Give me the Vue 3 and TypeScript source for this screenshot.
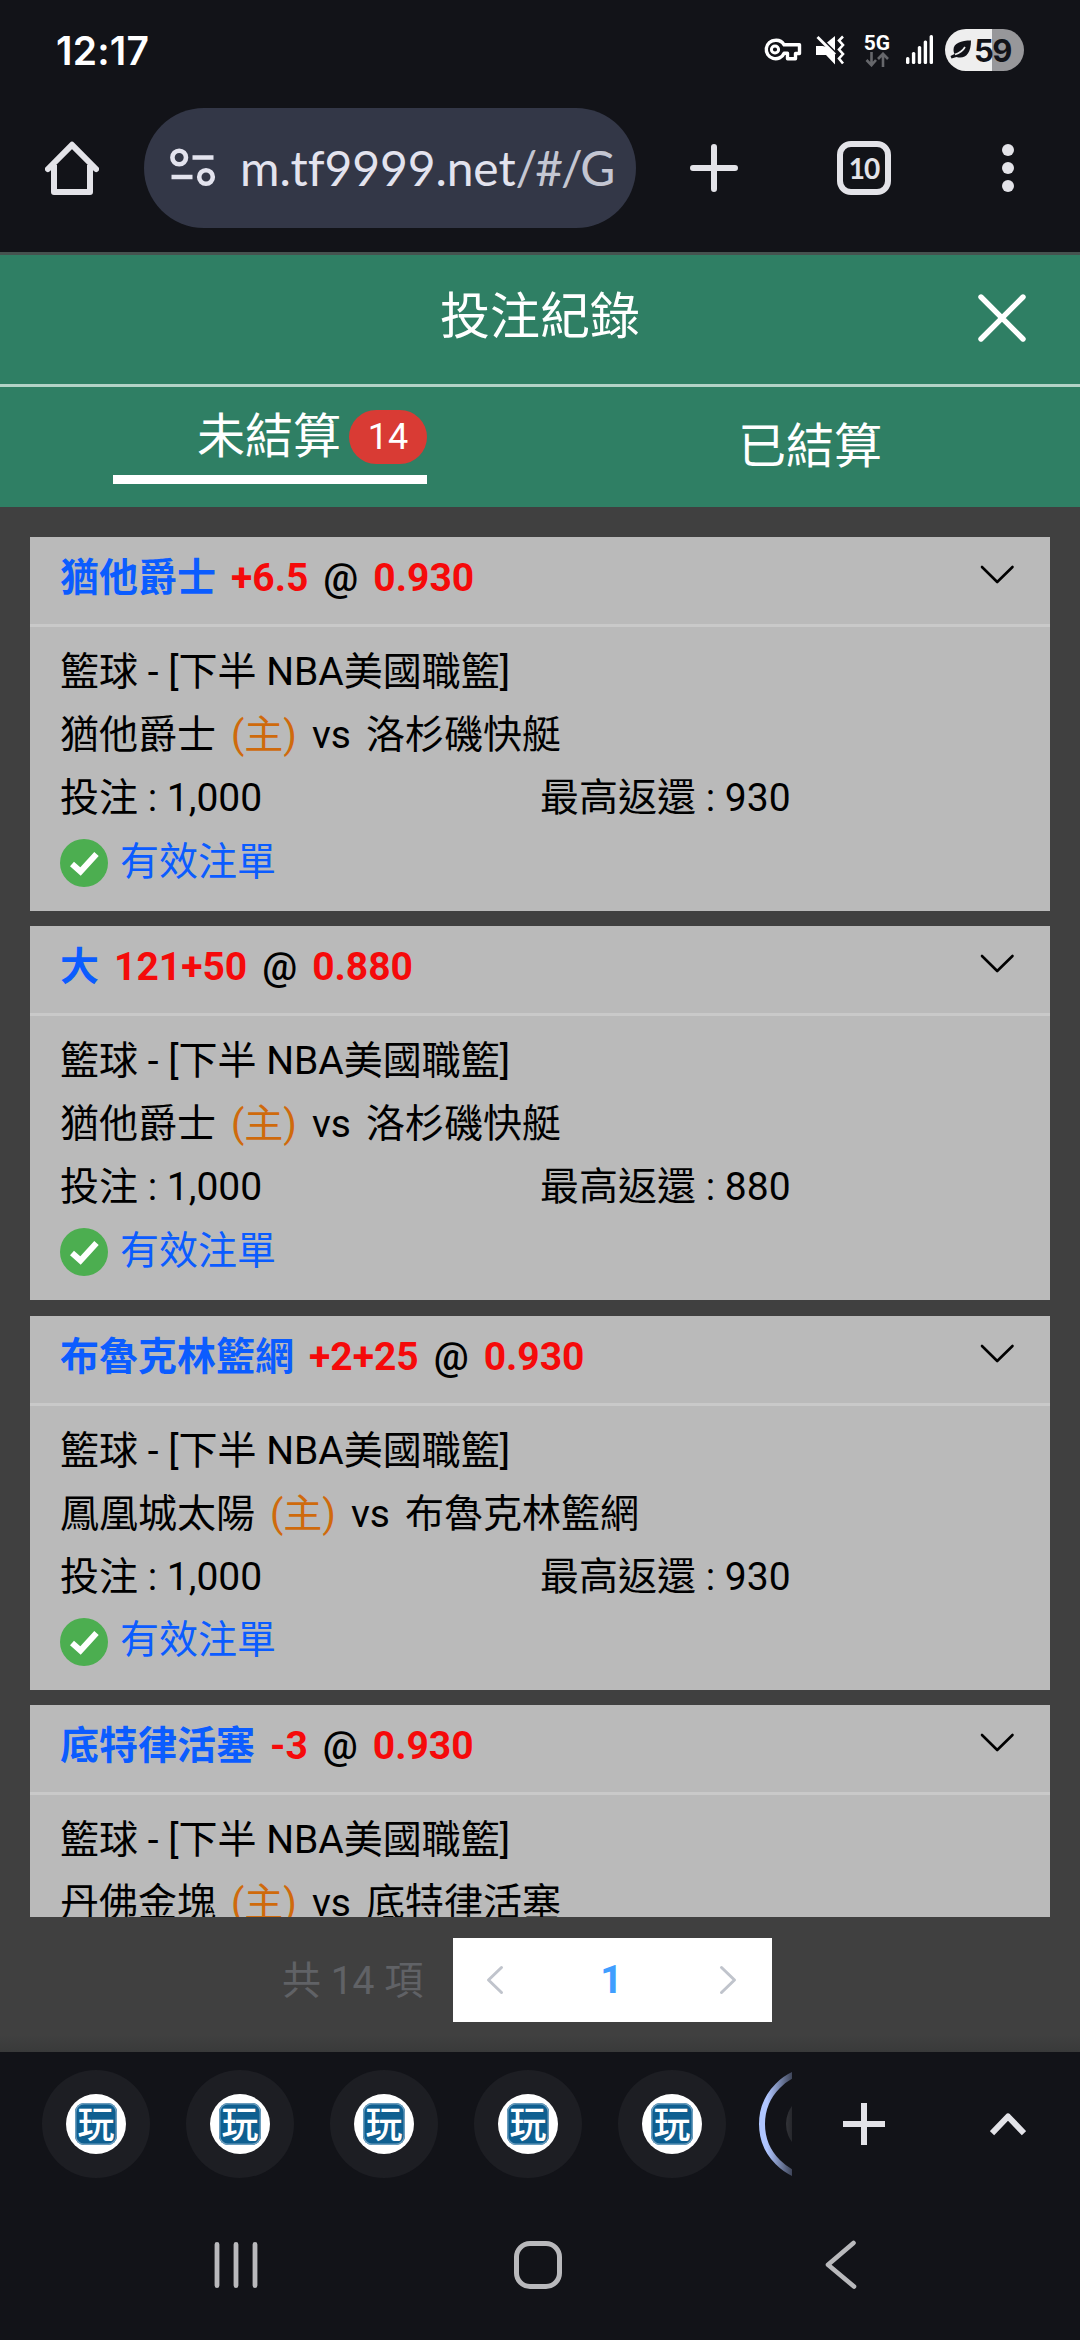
<script setup lang="ts">
interface Bet {
  pick: string
  line: string
  odds: string
  home: string
  away: string
  stake?: string
  payout?: string
}

const league = '籃球 - [下半 NBA美國職籃]'

const bets: Bet[] = [
  { pick: '猶他爵士', line: '+6.5', odds: '0.930', home: '猶他爵士', away: '洛杉磯快艇', stake: '1,000', payout: '930' },
  { pick: '大', line: '121+50', odds: '0.880', home: '猶他爵士', away: '洛杉磯快艇', stake: '1,000', payout: '880' },
  { pick: '布魯克林籃網', line: '+2+25', odds: '0.930', home: '鳳凰城太陽', away: '布魯克林籃網', stake: '1,000', payout: '930' },
  { pick: '底特律活塞', line: '-3', odds: '0.930', home: '丹佛金塊', away: '底特律活塞' },
]

const openTabs = 5
</script>

<template>
  <div class="screen">
    <header class="status">
      <span class="clock">12:17</span>
      <div class="indicators">
        <svg class="key" width="38" height="24" viewBox="0 0 38 24" fill="none" stroke="#fff" stroke-width="3.4" stroke-linejoin="round">
          <path d="M11.500 2.200a9.300 9.300 0 1 0 8.600 13h3.400v5.600h8V15.500h4V6.800H20.100A9.300 9.300 0 0 0 11.500 2.200z" />
          <circle cx="11" cy="11.500" r="3.600" stroke-width="3" />
        </svg>
        <svg class="mute" width="30" height="30" viewBox="0 0 30 30" fill="none">
          <path d="M1 11h6.500L12 12l8 8v9.500L11 20H1z" fill="#fff" />
          <path d="M12 7.500L20 1v14.500z" fill="#fff" />
          <path d="M2.500 2L20 19.500" stroke="#fff" stroke-width="2.800" />
          <path d="M28 1.500l-4 4 4 4.500-4 4.500 4 4.500-4 4.500 4 5" stroke="#fff" stroke-width="2.600" />
        </svg>
        <div class="net">
          <span>5G</span>
          <svg width="24" height="15" viewBox="0 0 24 15" fill="none" stroke="#66676b" stroke-width="2.600">
            <path d="M6.500 0v13M1.500 8l5 5.200L11 8M18 15V2M13 7l5-5.200L23 7" />
          </svg>
        </div>
        <svg class="signal" width="28" height="30" viewBox="0 0 28 30" fill="#fff">
          <rect x="0" y="22" width="3.400" height="7" rx="1.500" />
          <rect x="5.900" y="17" width="3.400" height="12" rx="1.500" />
          <rect x="11.800" y="11" width="3.400" height="18" rx="1.500" />
          <rect x="17.700" y="5.500" width="3.400" height="23.500" rx="1.500" />
          <rect x="23.600" y="0" width="3.400" height="29" rx="1.500" />
        </svg>
        <div class="battery">
          <svg width="22" height="20" viewBox="0 0 22 20">
            <path d="M21 .5C11 .5 3.500 3 3.500 10c0 1.500.3 2.800 1 4L.5 16l1 2.500 5-1.500C15 19.500 21 14 21 .5z" fill="#121318" />
            <path d="M5 14.500C10 13 13 10.500 15 7" stroke="#eee" stroke-width="1.700" fill="none" />
          </svg>
          <span>59</span>
        </div>
      </div>
    </header>

    <div class="toolbar">
      <svg class="home" width="54" height="54" viewBox="0 0 54 54" fill="none" stroke="#e3e3e8" stroke-width="6">
        <path d="M3 28L27 3.800 51 28" stroke-linecap="round" stroke-linejoin="round" />
        <path d="M9 24v27h36V24" stroke-linejoin="round" />
      </svg>
      <div class="omnibox">
        <svg width="46" height="40" viewBox="0 0 46 40" fill="none" stroke="#e3e3ee" stroke-width="4.600">
          <circle cx="9.200" cy="9.500" r="6.800" />
          <path d="M22.500 9.500h21M1.500 29H22.500" />
          <circle cx="36" cy="29" r="6.800" />
        </svg>
        <span class="url">m.tf9999.net<i>/#/G</i></span>
      </div>
      <svg class="plus" width="48" height="48" viewBox="0 0 48 48" stroke="#e3e3e8" stroke-width="6" stroke-linecap="round">
        <path d="M3 24h42M24 3v42" />
      </svg>
      <div class="count">10</div>
      <svg class="dots" width="12" height="48" viewBox="0 0 12 48" fill="#e3e3e8">
        <circle cx="6" cy="6" r="6" />
        <circle cx="6" cy="24" r="6" />
        <circle cx="6" cy="42" r="6" />
      </svg>
    </div>

    <main class="page">
      <div class="title">
        <h1>投注紀錄</h1>
        <svg class="close" width="48" height="48" viewBox="0 0 48 48" stroke="#fff" stroke-width="5.400" stroke-linecap="round">
          <path d="M3 3l42 42M45 3L3 45" />
        </svg>
      </div>
      <nav class="tabs">
        <div class="tab">
          <div class="active">未結算<span class="badge">14</span></div>
        </div>
        <div class="tab">已結算</div>
      </nav>

      <section class="list">
        <article v-for="(bet, i) in bets" :key="i" class="card">
          <div class="head">
            <b class="pick">{{ bet.pick }}</b>
            <b class="red">{{ bet.line }}</b>
            <span class="at">@</span>
            <b class="red">{{ bet.odds }}</b>
            <svg class="chev" width="36" height="20" viewBox="0 0 36 20" fill="none" stroke="#000" stroke-width="2.600" stroke-linecap="round" stroke-linejoin="round">
              <path d="M3 2l15.200 15L33.500 2" />
            </svg>
          </div>
          <div class="body">
            <div class="row">{{ league }}</div>
            <div class="row teams">
              <span>{{ bet.home }}</span>
              <span class="host">(主)</span>
              <span>vs</span>
              <span>{{ bet.away }}</span>
            </div>
            <template v-if="bet.stake">
              <div class="row money">
                <span>投注 : {{ bet.stake }}</span>
                <span>最高返還 : {{ bet.payout }}</span>
              </div>
              <div class="row valid">
                <svg width="48" height="48" viewBox="0 0 48 48">
                  <circle cx="24" cy="24" r="24" fill="#4cae50" />
                  <path d="M12 25l8.500 7.500L36.500 15" fill="none" stroke="#fff" stroke-width="6" />
                </svg>
                <span>有效注單</span>
              </div>
            </template>
          </div>
        </article>
      </section>

      <footer class="pager">
        <span class="total">共 14 項</span>
        <div class="pages">
          <svg width="18" height="30" viewBox="0 0 18 30" fill="none" stroke="#c0c4cc" stroke-width="3" stroke-linecap="round" stroke-linejoin="round">
            <path d="M15.500 2.500L2.500 15l13 12.500" />
          </svg>
          <b>1</b>
          <svg width="18" height="30" viewBox="0 0 18 30" fill="none" stroke="#c0c4cc" stroke-width="3" stroke-linecap="round" stroke-linejoin="round">
            <path d="M2.500 2.500L15.500 15l-13 12.500" />
          </svg>
        </div>
      </footer>
    </main>

    <div class="strip">
      <div v-for="n in openTabs" :key="n" class="chip">
        <div class="disc"><span class="logo">玩</span></div>
      </div>
      <div class="current">
        <svg width="33" height="114" viewBox="0 0 33 114" fill="none">
          <defs>
            <linearGradient id="fade" gradientUnits="userSpaceOnUse" x1="8" y1="0" x2="34" y2="0">
              <stop offset="0" stop-color="#121318" stop-opacity="0" />
              <stop offset="1" stop-color="#121318" stop-opacity=".75" />
            </linearGradient>
          </defs>
          <circle cx="57" cy="57" r="30" fill="#5a5b5f" />
          <circle cx="57" cy="57" r="54" stroke="#b0c6ff" stroke-width="6" />
          <rect width="33" height="114" fill="url(#fade)" />
        </svg>
      </div>
      <svg class="add" width="42" height="42" viewBox="0 0 42 42" stroke="#e3e3e8" stroke-width="6">
        <path d="M0 21h42M21 0v42" />
      </svg>
      <svg class="up" width="36" height="24" viewBox="0 0 36 24" fill="none" stroke="#e3e3e8" stroke-width="6" stroke-linejoin="round">
        <path d="M2 21.200L18 4.500 34 21.200" />
      </svg>
    </div>

    <div class="sysnav">
      <svg class="recents" width="44" height="48" viewBox="0 0 44 48" stroke="#b9b9bc" stroke-width="4.800" stroke-linecap="round">
        <path d="M3 3.500v41M22 3.500v41M41 3.500v41" />
      </svg>
      <div class="homekey"></div>
      <svg class="back" width="32" height="50" viewBox="0 0 32 50" fill="none" stroke="#b9b9bc" stroke-width="4.600" stroke-linecap="round" stroke-linejoin="round">
        <path d="M28.500 3L3 24.800 29 46.500" />
      </svg>
    </div>
  </div>
</template>

<style>
body {
  margin: 0;
  background: #121318;
}
</style>

<style scoped>
.screen {
  display: flex;
  flex-direction: column;
  width: 1080px;
  height: 2340px;
  overflow: hidden;
  background: #121318;
  color: #000;
  font-family: Roboto, "Noto Sans CJK TC", sans-serif;
}
svg {
  display: block;
  flex: none;
}
.status {
  display: flex;
  align-items: center;
  box-sizing: border-box;
  height: 84px;
  padding: 16px 56px 0;
}
.clock {
  color: #fff;
  font: 600 39px/1 Inter, sans-serif;
  letter-spacing: 0.2px;
}
.indicators {
  display: flex;
  align-items: center;
  margin-left: auto;
}
.mute {
  margin-left: 13px;
}
.net {
  display: flex;
  flex-direction: column;
  align-items: center;
  width: 26px;
  margin-left: 19px;
  color: #fff;
  font: 700 21px/18px Roboto, sans-serif;
}
.signal {
  margin-left: 16px;
}
.battery {
  display: flex;
  align-items: center;
  box-sizing: border-box;
  width: 79px;
  height: 42px;
  margin-left: 11px;
  padding-left: 5px;
  border-radius: 21px;
  background: linear-gradient(90deg, #eee 46.500px, #97979a 46.500px);
  color: #121318;
  font: 700 31px/1 Inter, sans-serif;
  letter-spacing: -1.500px;
}
.battery span {
  margin-left: 2px;
}
.toolbar {
  display: flex;
  align-items: center;
  height: 168px;
  padding-left: 45px;
}
.omnibox {
  display: flex;
  align-items: center;
  box-sizing: border-box;
  width: 492px;
  height: 120px;
  margin-left: 45px;
  padding-left: 26px;
  border-radius: 60px;
  background: #333747;
}
.url {
  margin-left: 24px;
  color: #e3e3ee;
  font: 400 48px/1 Lato, sans-serif;
  letter-spacing: -0.1px;
  white-space: nowrap;
}
.url i {
  color: #c4c6d2;
  font-style: normal;
  letter-spacing: -2px;
}
.plus {
  margin-left: 54px;
}
.count {
  box-sizing: border-box;
  width: 54px;
  height: 54px;
  margin-left: 99px;
  border: 6px solid #e3e3e8;
  border-radius: 14px;
  color: #e3e3e8;
  font: 700 28px/42px Lato, sans-serif;
  letter-spacing: -1px;
  text-align: center;
}
.dots {
  margin-left: 111px;
}
.page {
  display: flex;
  flex-direction: column;
  box-sizing: border-box;
  height: 1800px;
  border-top: 3px solid #46524f;
  background: linear-gradient(#404040 1780px, #393a3a);
}
.title {
  position: relative;
  height: 129px;
  border-bottom: 3px solid #b3d3c7;
  background: #2f7f64;
  color: #fff;
}
h1 {
  margin: 0;
  font-size: 50px;
  font-weight: 400;
  line-height: 125px;
  text-align: center;
}
.close {
  position: absolute;
  top: 39px;
  right: 54px;
}
.tabs {
  display: flex;
  height: 120px;
  background: #2f7f64;
  color: #fff;
  font-size: 48px;
}
.tab {
  display: flex;
  flex: 1;
  align-items: center;
  justify-content: center;
  line-height: 70px;
}
.active {
  display: flex;
  align-items: center;
  justify-content: flex-end;
  box-sizing: border-box;
  width: 314px;
  height: 84px;
  margin-top: -10px;
  padding-bottom: 1px;
  border-bottom: 9px solid #fff;
}
.badge {
  width: 78px;
  height: 54px;
  margin-left: 8px;
  border-radius: 27px;
  background: #d93b34;
  font-size: 36px;
  line-height: 54px;
  text-align: center;
}
.list {
  height: 1380px;
  margin: 30px 30px 0;
  overflow: hidden;
  font-size: 39px;
}
.card {
  box-sizing: border-box;
  height: 374px;
  margin-bottom: 15.300px;
  background: #bababa;
}
.head {
  display: flex;
  align-items: baseline;
  gap: 15px;
  box-sizing: border-box;
  height: 90px;
  padding: 0 35px 0 30px;
  border-bottom: 3px solid #c9c9c9;
  line-height: 82px;
  white-space: nowrap;
}
.pick {
  color: #0b5cff;
}
.red {
  color: #f50a0a;
}
.at {
  font-weight: 500;
}
.chev {
  align-self: flex-start;
  margin: 28px 0 0 auto;
}
.body {
  padding: 14px 30px 0;
}
.row {
  display: flex;
  align-items: center;
  height: 63px;
  line-height: 63px;
  white-space: pre;
}
.teams {
  gap: 15px;
}
.host {
  color: #cf6a0c;
}
.money span {
  width: 480px;
}
.valid {
  gap: 12px;
  color: #0b5cff;
}
.valid svg {
  margin-top: 3px;
}
.valid span {
  margin-top: 1px;
}
.pager {
  display: flex;
  align-items: center;
  height: 84px;
  margin: 21px 0 0 282px;
  font-size: 39px;
}
.total {
  width: 171px;
  padding-bottom: 6px;
  color: #606266;
}
.pages {
  display: flex;
  align-items: center;
  justify-content: space-between;
  box-sizing: border-box;
  width: 319px;
  height: 84px;
  padding: 0 35px 0 33px;
  background: #fff;
}
.pages b {
  color: #409eff;
}
.strip {
  display: flex;
  align-items: center;
  height: 144px;
  padding-left: 42px;
}
.chip {
  display: flex;
  flex: none;
  align-items: center;
  justify-content: center;
  width: 108px;
  height: 108px;
  margin-right: 36px;
  border-radius: 50%;
  background: #1d1e23;
}
.disc {
  display: flex;
  align-items: center;
  justify-content: center;
  width: 60px;
  height: 60px;
  border-radius: 50%;
  background: #fff;
}
.logo {
  width: 42px;
  height: 42px;
  border-radius: 9px;
  background: #0f5f90;
  color: #fff;
  font: 500 37px/39px "Noto Sans CJK TC", sans-serif;
  text-align: center;
  box-shadow: inset 0 0 0 1.500px #6b9dbd;
}
.current {
  margin-left: -3px;
}
.add {
  margin-left: 51px;
}
.up {
  margin-left: 105px;
}
.sysnav {
  display: flex;
  align-items: center;
  height: 138px;
  padding-left: 214px;
}
.homekey {
  box-sizing: border-box;
  width: 48px;
  height: 48px;
  margin-left: 256px;
  border: 5px solid #b9b9bc;
  border-radius: 16px;
}
.back {
  margin-left: 263px;
}
</style>
